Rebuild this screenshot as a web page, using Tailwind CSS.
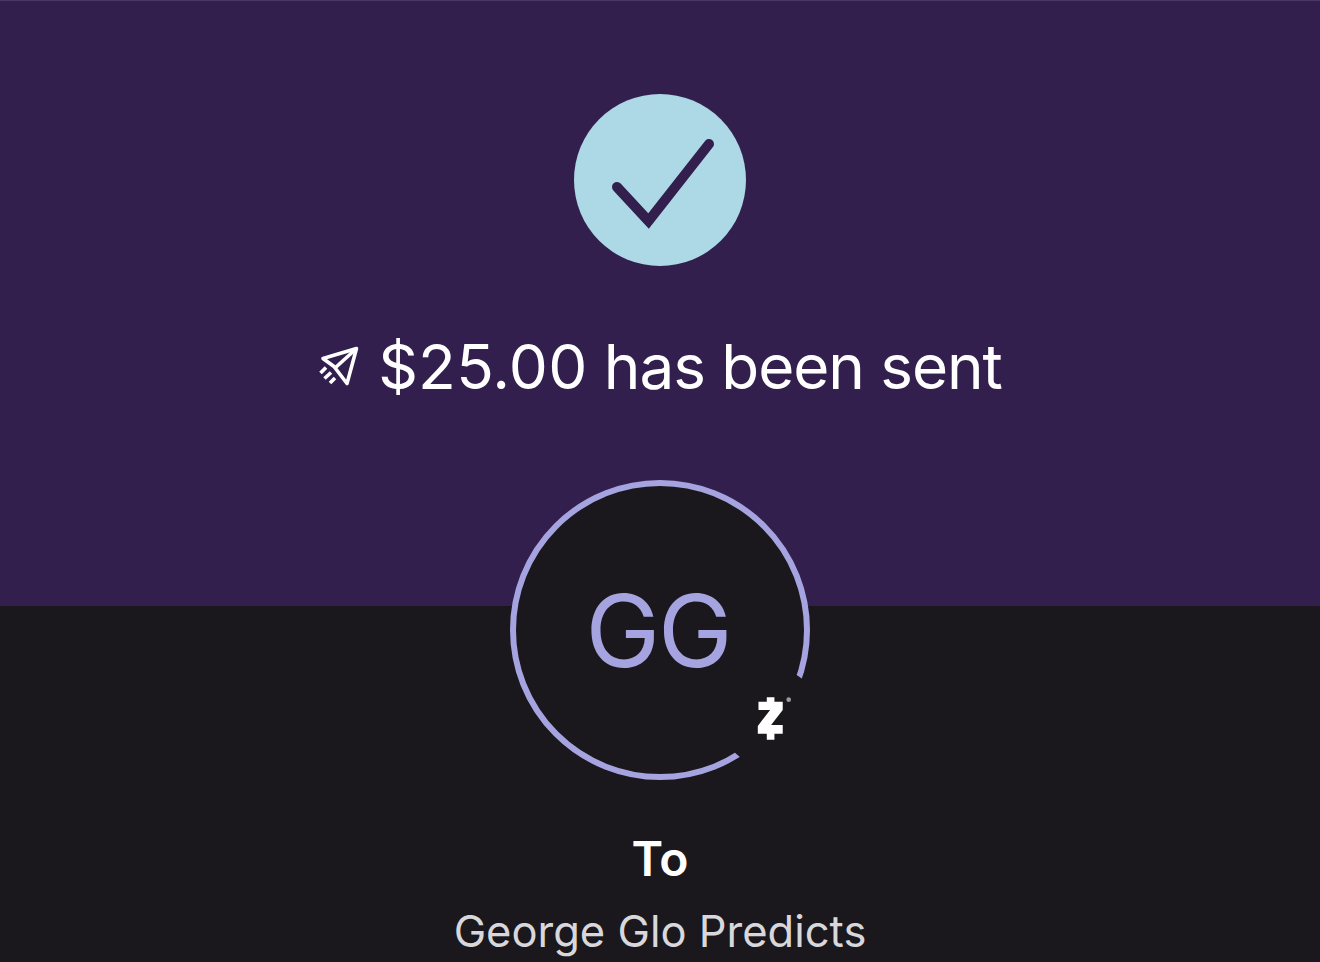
<!DOCTYPE html>
<html lang="en">
  <head>
    <meta charset="UTF-8" />
    <meta name="viewport" content="width=device-width, initial-scale=1.0" />
    <title>Payment sent</title>
    <script src="https://cdn.jsdelivr.net/npm/@tailwindcss/browser@4"></script>
  </head>
  <body class="w-[1320px] h-[962px] overflow-hidden bg-[#1a181c] font-['Inter',sans-serif]">
    <section class="h-[606px] bg-[#321f4d] border-t border-[#4a3a63] flex flex-col items-center pt-[93px]">
      <div class="w-[172px] h-[172px] rounded-full bg-[#add8e6]">
        <svg width="172" height="172" viewBox="0 0 172 172" fill="none">
          <path d="M43 93L74.500 127L135 50" stroke="#321f4d" stroke-width="10" stroke-linecap="round" />
        </svg>
      </div>
      <div class="mt-[62px] flex items-center gap-[18px] h-[78px]">
        <svg width="42" height="42" viewBox="0 0 42 42" fill="none" stroke="#ffffff" stroke-width="3.600">
          <path d="M38.500 2.500L5 12.500L16 20.500L29 37.500Z" stroke-linejoin="round" />
          <path d="M38.500 2.500L17 22" />
          <path d="M2.500 27L8 21.500M6.500 32.500L13 26.500M12 37L17 32" />
        </svg>
        <h1 class="text-[62px] leading-[78px] font-normal text-white tracking-[-1.060px]"><span class="tracking-[0.2px]">$25.00</span> has been sent</h1>
      </div>
    </section>

    <section class="flex flex-col items-center">
      <div class="relative -mt-[126px] w-[300px] h-[300px] rounded-full border-[6px] border-[#a5a3e0] bg-[#1a181c] flex items-center justify-center">
        <span class="text-[100px] leading-none text-[#a5a3e0] tracking-[-2px] -ml-[4px] mt-[2px]">GG</span>
        <div class="absolute left-[205px] top-[182px] w-[100px] h-[100px] rounded-full bg-[#1a181c]">
          <svg class="absolute left-[35px] top-[27px]" width="38.5" height="46.5" viewBox="140 105 115 140">
            <path d="M172 112H195V125H220V150L185 195H220V222H195V240H172V222H145V198L182 150H147V125H172Z" fill="#ffffff" />
            <circle cx="238" cy="119" r="7" fill="#9a9a9d" />
          </svg>
        </div>
      </div>
      <p class="mt-[50px] text-[48px] leading-[58px] font-semibold text-white">To</p>
      <p class="mt-[14px] text-[43.500px] leading-[58px] text-[#d8d7db]">George Glo Predicts</p>
    </section>
  </body>
</html>
